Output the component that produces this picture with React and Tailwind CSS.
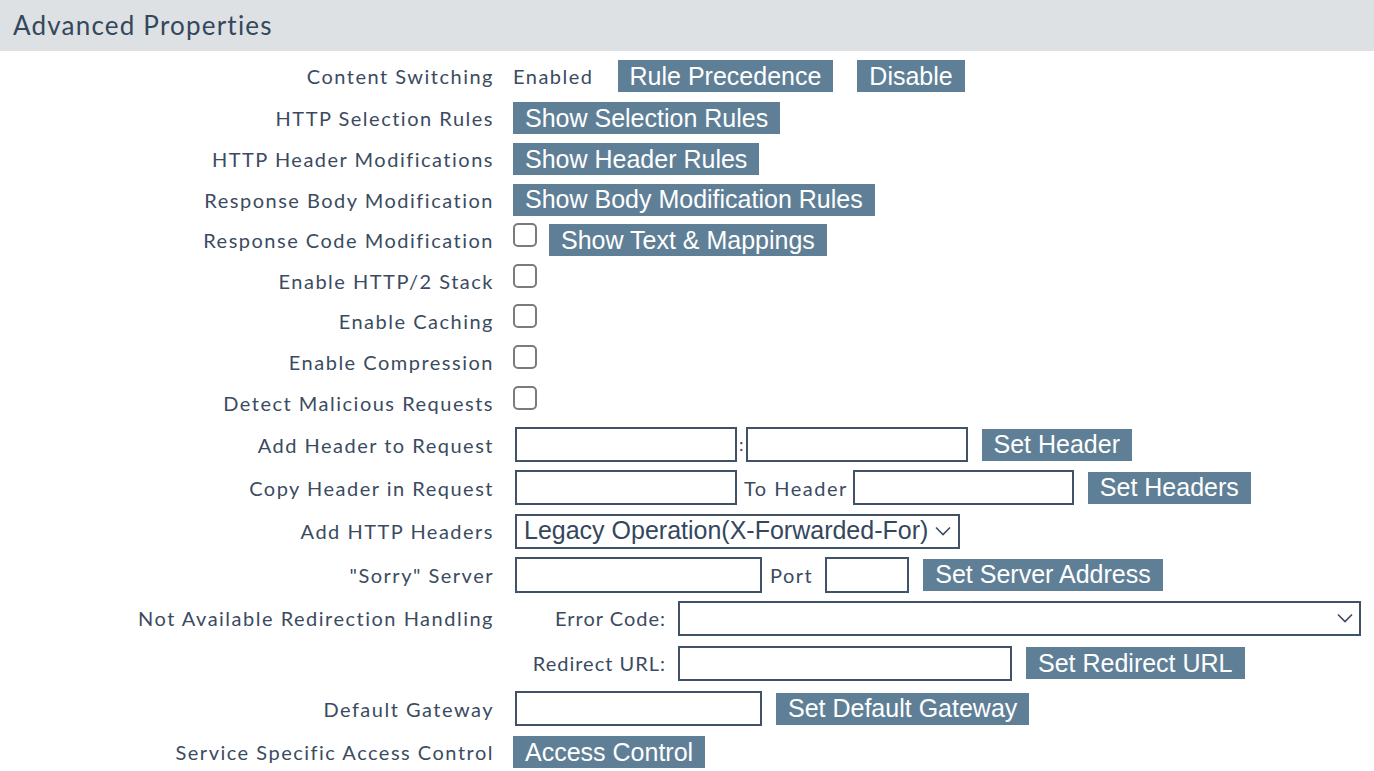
import React from "react";

const label = "text-[20px] tracking-[1.5px] text-[#3b4b5f] text-right whitespace-nowrap";
const text = "text-[20px] tracking-[1.5px] text-[#3b4b5f] whitespace-nowrap";
const btn = "h-[32px] px-[12px] bg-[#5f7f97] text-white text-[25px] leading-none font-['Liberation_Sans',Arial,sans-serif] flex items-center whitespace-nowrap";
const input = "h-[35px] border-2 border-[#405168] bg-white";
const box = "w-[24px] h-[24px] border-2 border-[#7b7b7b] rounded-[5px] bg-white";

function Chevron() {
  return (
    <svg width="16" height="10" viewBox="0 0 16 10" fill="none" stroke="#3b4b5f" strokeWidth="1.6">
      <path d="M1 1.5 L8 8.5 L15 1.5" />
    </svg>
  );
}

function Row({ h, name, children }) {
  return (
    <div className={`flex items-center ${h}`}>
      <div className={`w-[494px] shrink-0 ${label}`}>{name}</div>
      <div className="ml-[19px] flex items-center">{children}</div>
    </div>
  );
}

export default function App() {
  return (
    <div className="w-[1374px] h-[771px] bg-white overflow-hidden font-['Lato','Open_Sans',sans-serif]">
      <div className="h-[51px] bg-[#dde1e3] px-[13px] flex items-center">
        <h1 className="text-[26px] tracking-[1.2px] text-[#34475c]">Advanced Properties</h1>
      </div>

      <div className="pt-[4px]">
        <Row h="h-[42px]" name="Content Switching">
          <span className={text}>Enabled</span>
          <button className={`${btn} ml-[24px]`}>Rule Precedence</button>
          <button className={`${btn} ml-[24px]`}>Disable</button>
        </Row>
        <Row h="h-[42px]" name="HTTP Selection Rules">
          <button className={btn}>Show Selection Rules</button>
        </Row>
        <Row h="h-[40px]" name="HTTP Header Modifications">
          <button className={btn}>Show Header Rules</button>
        </Row>
        <Row h="h-[41px]" name="Response Body Modification">
          <button className={btn}>Show Body Modification Rules</button>
        </Row>
        <Row h="h-[40px]" name="Response Code Modification">
          <div className={`${box} -mt-[10px]`} />
          <button className={`${btn} ml-[12px]`}>Show Text &amp; Mappings</button>
        </Row>
        <Row h="h-[41px]" name="Enable HTTP/2 Stack">
          <div className={`${box} -mt-[10px]`} />
        </Row>
        <Row h="h-[40px]" name="Enable Caching">
          <div className={`${box} -mt-[10px]`} />
        </Row>
        <Row h="h-[41px]" name="Enable Compression">
          <div className={`${box} -mt-[10px]`} />
        </Row>
        <Row h="h-[41px]" name="Detect Malicious Requests">
          <div className={`${box} -mt-[10px]`} />
        </Row>
        <Row h="h-[43px]" name="Add Header to Request">
          <div className={`${input} w-[222px] ml-[2px]`} />
          <span className="text-[18px] text-[#3b4b5f] mx-[2px]">:</span>
          <div className={`${input} w-[222px]`} />
          <button className={`${btn} ml-[14px]`}>Set Header</button>
        </Row>
        <Row h="h-[43px]" name="Copy Header in Request">
          <div className={`${input} w-[222px] ml-[2px]`} />
          <span className={`${text} ml-[7px] mr-[5px]`}>To Header</span>
          <div className={`${input} w-[221px]`} />
          <button className={`${btn} ml-[14px]`}>Set Headers</button>
        </Row>
        <Row h="h-[44px]" name="Add HTTP Headers">
          <div className={`${input} w-[445px] ml-[2px] flex items-center justify-between pl-[7px] pr-[7px]`}>
            <span className="text-[25px] text-[#34475c] font-['Liberation_Sans',Arial,sans-serif] whitespace-nowrap">Legacy Operation(X-Forwarded-For)</span>
            <Chevron />
          </div>
        </Row>
        <Row h="h-[43px]" name={'"Sorry" Server'}>
          <div className={`${input} w-[247px] h-[36px] ml-[2px]`} />
          <span className={`${text} ml-[8px] mr-[12px]`}>Port</span>
          <div className={`${input} w-[84px] h-[36px]`} />
          <button className={`${btn} ml-[14px]`}>Set Server Address</button>
        </Row>
        <Row h="h-[44px]" name="Not Available Redirection Handling">
          <span className="w-[153px] text-right text-[20px] tracking-[1px] text-[#3b4b5f] whitespace-nowrap">Error Code:</span>
          <div className={`${input} w-[683px] ml-[12px] flex items-center justify-end pr-[6px]`}>
            <Chevron />
          </div>
        </Row>
        <Row h="h-[46px]" name="">
          <span className="w-[153px] text-right text-[20px] tracking-[1px] text-[#3b4b5f] whitespace-nowrap">Redirect URL:</span>
          <div className={`${input} w-[334px] ml-[12px]`} />
          <button className={`${btn} ml-[14px]`}>Set Redirect URL</button>
        </Row>
        <Row h="h-[45px]" name="Default Gateway">
          <div className={`${input} w-[247px] ml-[2px]`} />
          <button className={`${btn} ml-[14px]`}>Set Default Gateway</button>
        </Row>
        <Row h="h-[42px]" name="Service Specific Access Control">
          <button className={btn}>Access Control</button>
        </Row>
      </div>
    </div>
  );
}
